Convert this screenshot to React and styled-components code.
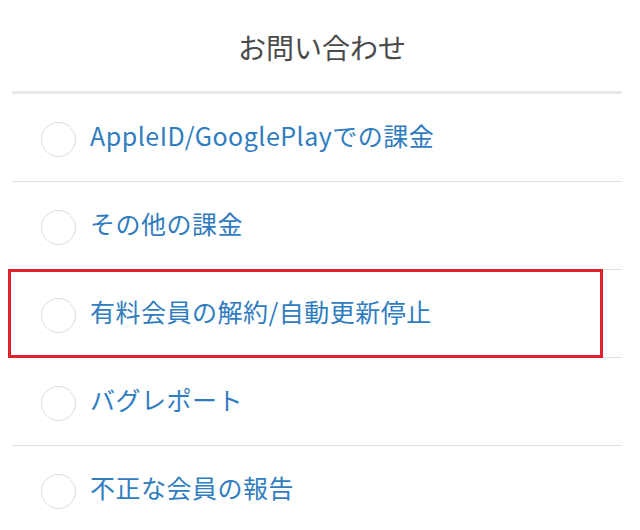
import React from "react";
import styled, { createGlobalStyle } from "styled-components";

const Global = createGlobalStyle`
  html, body { margin: 0; padding: 0; background: #ffffff; }
  body { font-family: "Noto Sans CJK JP", "Noto Sans", sans-serif; }
`;

const Page = styled.div`
  width: 640px;
  height: 530px;
  overflow: hidden;
  background: #fff;
`;

const Header = styled.header`
  height: 91px;
  box-sizing: border-box;
  padding-top: 27px;
  padding-left: 4px;
  text-align: center;
  font-size: 28px;
  line-height: 40px;
  color: #4a4a4a;
  font-weight: 400;
`;

const List = styled.ul`
  list-style: none;
  margin: 0 0 0 12px;
  padding: 0;
  width: 610px;
  border-top: 3px solid #e8e8e8;
`;

const Row = styled.li`
  position: relative;
  height: 87px;
  display: flex;
  align-items: center;
  gap: 14px;
  padding-left: 29px;
  border-bottom: 1px solid #e2e2e2;
`;

const Radio = styled.span`
  flex: none;
  width: 35px;
  height: 35px;
  box-sizing: border-box;
  border-radius: 50%;
  border: 1px solid #dcdcdc;
  margin-top: 4px;
  background: #fff;
`;

const Label = styled.span`
  font-size: 25px;
  line-height: 32px;
  padding-bottom: 6px;
  letter-spacing: 0.5px;
  color: #2f7cbf;
  white-space: nowrap;
`;

const Highlight = styled.div`
  position: absolute;
  left: -4px;
  top: -1px;
  width: 595px;
  height: 89px;
  box-sizing: border-box;
  border: 3px solid #e0202c;
  pointer-events: none;
`;

const items = [
  { label: "AppleID/GooglePlayでの課金" },
  { label: "その他の課金" },
  { label: "有料会員の解約/自動更新停止", highlighted: true },
  { label: "バグレポート" },
  { label: "不正な会員の報告" },
];

export default function App() {
  return (
    <Page>
      <Global />
      <Header>お問い合わせ</Header>
      <List>
        {items.map((it) => (
          <Row key={it.label}>
            <Radio />
            <Label>{it.label}</Label>
            {it.highlighted && <Highlight />}
          </Row>
        ))}
      </List>
    </Page>
  );
}
